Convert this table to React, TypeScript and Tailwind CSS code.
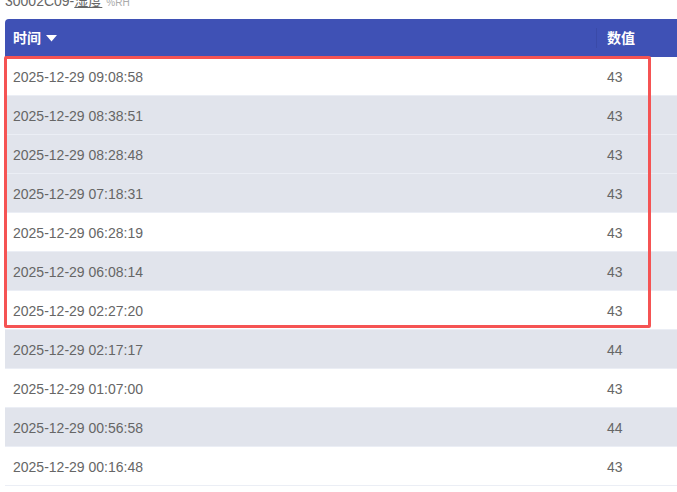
import React from "react";

const rows: [string, string, boolean][] = [
  ["2025-12-29 09:08:58", "43", false],
  ["2025-12-29 08:38:51", "43", true],
  ["2025-12-29 08:28:48", "43", true],
  ["2025-12-29 07:18:31", "43", true],
  ["2025-12-29 06:28:19", "43", false],
  ["2025-12-29 06:08:14", "43", true],
  ["2025-12-29 02:27:20", "43", false],
  ["2025-12-29 02:17:17", "44", true],
  ["2025-12-29 01:07:00", "43", false],
  ["2025-12-29 00:56:58", "44", true],
  ["2025-12-29 00:16:48", "43", false],
];

export default function App() {
  return (
    <div
      className="relative w-[677px] h-[492px] overflow-hidden bg-white"
      style={{ fontFamily: '"Liberation Sans", Arial, "Noto Sans CJK SC", sans-serif' }}
    >
      <div className="h-[19px] relative">
        <div className="absolute left-[5px] top-[-9px] flex items-baseline gap-[4px] text-[14px] text-[#666] leading-[20px]">
          <span>
            30002C09-<span className="underline">湿度</span>
          </span>
          <span className="text-[10px] text-[#aaa]">%RH</span>
        </div>
      </div>
      <div className="ml-[5px] w-[700px]">
        <div className="flex h-[38px] items-center bg-[#3f51b5] rounded-tl-[4px] text-white text-[14px]">
          <div className="w-[592px] pl-[8px] flex items-center gap-[5px] relative h-full">
            <span className="font-bold">时间</span>
            <svg width="11" height="7" viewBox="0 0 11 7">
              <path d="M0 0 L11 0 L5.5 6.5 Z" fill="white" />
            </svg>
            <div className="absolute right-0 top-[9px] h-[20px] w-px bg-[#3a4aa8]" />
          </div>
          <div className="pl-[10px] font-bold">数值</div>
        </div>
        {rows.map(([t, v, g], i) => (
          <div
            key={i}
            className={`flex h-[39px] pt-[2px] items-center border-b border-[#ebeef5] text-[14px] text-[#666] ${
              g ? "bg-[#e1e4ec]" : "bg-white"
            }`}
          >
            <div className="w-[592px] pl-[8px]">{t}</div>
            <div className="pl-[10px]">{v}</div>
          </div>
        ))}
      </div>
      <div className="absolute left-[4px] top-[56px] w-[647px] h-[272px] border-[3px] border-[#f55353] rounded-[2px]" />
    </div>
  );
}
